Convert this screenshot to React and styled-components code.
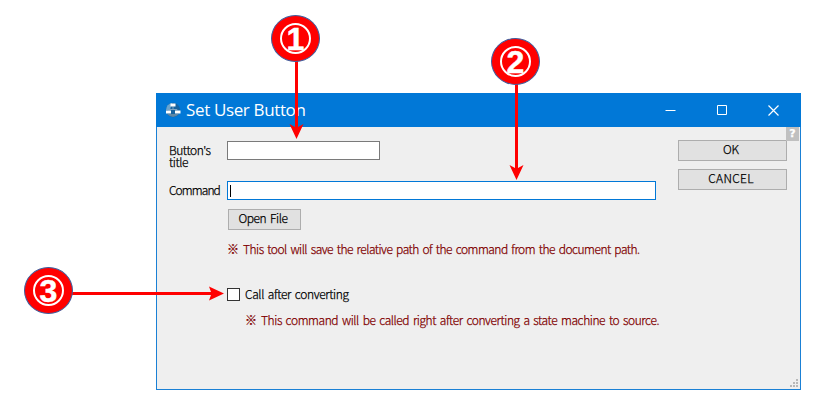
import React from "react";
import styled, { createGlobalStyle } from "styled-components";

const GlobalStyle = createGlobalStyle`
  * { box-sizing: border-box; }
  body { margin: 0; background: #fff; }
`;

const Stage = styled.main`
  position: relative;
  width: 828px;
  height: 413px;
  padding: 93px 27px 0 156px;
  overflow: hidden;
  background: #fff;
  font-family: "Noto Sans CJK JP", "Noto Sans", sans-serif;
  font-size: 12px;
  font-weight: 300;
  color: #000;
`;

const Dialog = styled.section`
  position: relative;
  display: flex;
  flex-direction: column;
  width: 645px;
  height: 297px;
  border: 1px solid #1a80d5;
  background: #efefef;
`;

const TitleBar = styled.header`
  display: flex;
  align-items: center;
  flex: 0 0 34px;
  margin: -1px -1px 0;
  padding-left: 9px;
  background: #0178d7;
  color: #fff;
`;

const Title = styled.h1`
  flex: 1;
  margin: 0 0 0 5px;
  font: 400 17px/34px "Open Sans", "Noto Sans", sans-serif;
  letter-spacing: ${(p) => p.$spacing}px;
  white-space: nowrap;
`;

const Caption = styled.div`
  display: flex;
  gap: 41px;
  padding-right: 22px;
  svg { display: block; }
`;

const Body = styled.div`
  display: flex;
  flex: 1;
  padding-left: 12px;
  -webkit-text-stroke: 0.25px currentColor;
`;

const Form = styled.div`
  width: 487px;
  padding-top: 14px;
`;

const Field = styled.label`
  display: flex;
  height: ${(p) => p.$height}px;
`;

const FieldName = styled.span`
  flex: 0 0 58px;
  padding-top: 3px;
  line-height: 12px;
  letter-spacing: ${(p) => p.$spacing}px;
  white-space: pre-line;
`;

const TextBox = styled.span`
  display: block;
  width: ${(p) => p.$width}px;
  height: 19px;
  padding: 3px 2px;
  border: 1px solid ${(p) => (p.$focused ? "#0178d7" : "#7a7a7a")};
  background: #fff;
`;

const Caret = styled.i`
  display: block;
  width: 1px;
  height: 12px;
  background: #000;
`;

const Button = styled.button`
  display: block;
  width: ${(p) => p.$width}px;
  height: 21px;
  padding: 0 3px 3px 0;
  border: 1px solid #adadad;
  border-radius: 0;
  background: #e1e1e1;
  color: #000;
  font: inherit;
  line-height: 16px;
  letter-spacing: ${(p) => p.$spacing || 0}px;
  word-spacing: 1.5px;
`;

const OpenRow = styled.div`
  padding: 0 0 0 59px;
  height: 33px;
`;

const Note = styled.p`
  display: flex;
  margin: 0 0 0 ${(p) => p.$indent}px;
  height: 14px;
  line-height: 14px;
  color: #800000;
  white-space: nowrap;
`;

const Mark = styled.span`
  flex: 0 0 16px;
`;

const NoteText = styled.span`
  letter-spacing: ${(p) => p.$spacing}px;
  word-spacing: 1.5px;
`;

const CheckRow = styled.label`
  display: flex;
  align-items: center;
  gap: 5px;
  height: 13px;
  margin: 32px 0 12px 58px;
  line-height: 13px;
  letter-spacing: ${(p) => p.$spacing}px;
  word-spacing: 1.5px;
`;

const CheckLabel = styled.span`
  padding-bottom: 2px;
`;

const CheckBox = styled.span`
  width: 13px;
  height: 13px;
  border: 1px solid #333;
  background: #fff;
`;

const Actions = styled.div`
  display: flex;
  flex-direction: column;
  gap: 8px;
  width: 109px;
  margin-left: 22px;
  padding-top: 13px;
`;

const Help = styled.span`
  width: 13px;
  height: 14px;
  margin-left: -1px;
  background: #c0c0c0;
  color: #fff;
  font: 700 11px/14px "DejaVu Sans", sans-serif;
  text-align: center;
`;

const Grip = styled.svg`
  position: absolute;
  right: 2px;
  bottom: 2px;
`;

const Overlay = styled.svg`
  position: absolute;
  inset: 0;
`;

const Badge = styled.span`
  position: absolute;
  left: ${(p) => p.$x}px;
  top: ${(p) => p.$y}px;
  display: grid;
  place-items: center;
  width: 49px;
  height: 47px;
  border: 1px solid #3f5f9f;
  border-radius: 50%;
  background: #f00;
  color: #fff;
`;

const Ring = styled.span`
  display: flex;
  justify-content: center;
  width: 31px;
  height: 31px;
  border: 2px solid #fff;
  border-radius: 50%;
  font: 700 32px/28px "Liberation Sans", sans-serif;
  -webkit-text-stroke: 0.5px #fff;
`;

function NumberBadge({ x, y, children }) {
  return (
    <Badge $x={x} $y={y}>
      <Ring>{children}</Ring>
    </Badge>
  );
}

function AppIcon() {
  return (
    <svg width="16" height="16" viewBox="0 0 16 16">
      <circle cx="8" cy="8" r="7.2" fill="#17639f" />
      <path d="M1 8A7 7 0 0 1 7 1L5 8Z" fill="#6aa5cf" />
      <path d="M2 12Q8 18 14 12Z" fill="#6088a5" />
      <path d="M8 4.5V7.5M4 8.5V7.5H12V8.5" fill="none" stroke="#7fa3c0" />
      <rect x="5.5" y="1.5" width="5" height="3" fill="#fff" />
      <rect x="1" y="8.5" width="5" height="3" fill="#fff" />
      <rect x="10" y="8.5" width="5.5" height="3" fill="#fff" />
    </svg>
  );
}

export default function App() {
  return (
    <Stage>
      <GlobalStyle />
      <Dialog>
        <TitleBar>
          <AppIcon />
          <Title $spacing={-0.36}>Set User Button</Title>
          <Caption>
            <svg width="11" height="11"><path d="M0.5 5.5H10.5" stroke="#fff" /></svg>
            <svg width="10" height="11"><path d="M.5 .5H9.5V9.5H.5Z" fill="none" stroke="#fff" /></svg>
            <svg width="11" height="11"><path d="M.5 .5L10.5 10.5M10.5 .5L.5 10.5" stroke="#fff" strokeWidth="1.2" /></svg>
          </Caption>
        </TitleBar>
        <Body>
          <Form>
            <Field $height={40}>
              <FieldName $spacing={-0.45}>{"Button's\ntitle"}</FieldName>
              <TextBox $width={153} />
            </Field>
            <Field $height={28}>
              <FieldName $spacing={-0.9}>Command</FieldName>
              <TextBox $width={429} $focused><Caret /></TextBox>
            </Field>
            <OpenRow>
              <Button $width={73} $spacing={-0.4}>Open File</Button>
            </OpenRow>
            <Note $indent={58}>
              <Mark>※</Mark>
              <NoteText $spacing={-0.5}>This tool will save the relative path of the command from the document path.</NoteText>
            </Note>
            <CheckRow $spacing={-0.36}>
              <CheckBox />
              <CheckLabel>Call after converting</CheckLabel>
            </CheckRow>
            <Note $indent={76}>
              <Mark>※</Mark>
              <NoteText $spacing={-0.42}>This command will be called right after converting a state machine to source.</NoteText>
            </Note>
          </Form>
          <Actions>
            <Button $width={109} $spacing={-0.2}>OK</Button>
            <Button $width={109} $spacing={0.3}>CANCEL</Button>
          </Actions>
          <Help>?</Help>
        </Body>
        <Grip width="8" height="8" fill="#b8b8b8">
          <path d="M6 0h2v2h-2zM3 3h2v2h-2zM6 3h2v2h-2zM0 6h2v2h-2zM3 6h2v2h-2zM6 6h2v2h-2z" />
        </Grip>
      </Dialog>
      <Overlay width="828" height="413" fill="#f00">
        <path d="M295 60h3v67l5.5-3l-7 15l-7-15l5.5 3z" />
        <path d="M515 83h3v85l5.5-3l-7 15l-7-15l5.5 3z" />
        <path d="M72 292h139l-2-5.5l15 7l-15 7l2-5.5h-139z" />
      </Overlay>
      <NumberBadge x={271} y={15}>1</NumberBadge>
      <NumberBadge x={491} y={38}>2</NumberBadge>
      <NumberBadge x={24} y={267}>3</NumberBadge>
    </Stage>
  );
}
